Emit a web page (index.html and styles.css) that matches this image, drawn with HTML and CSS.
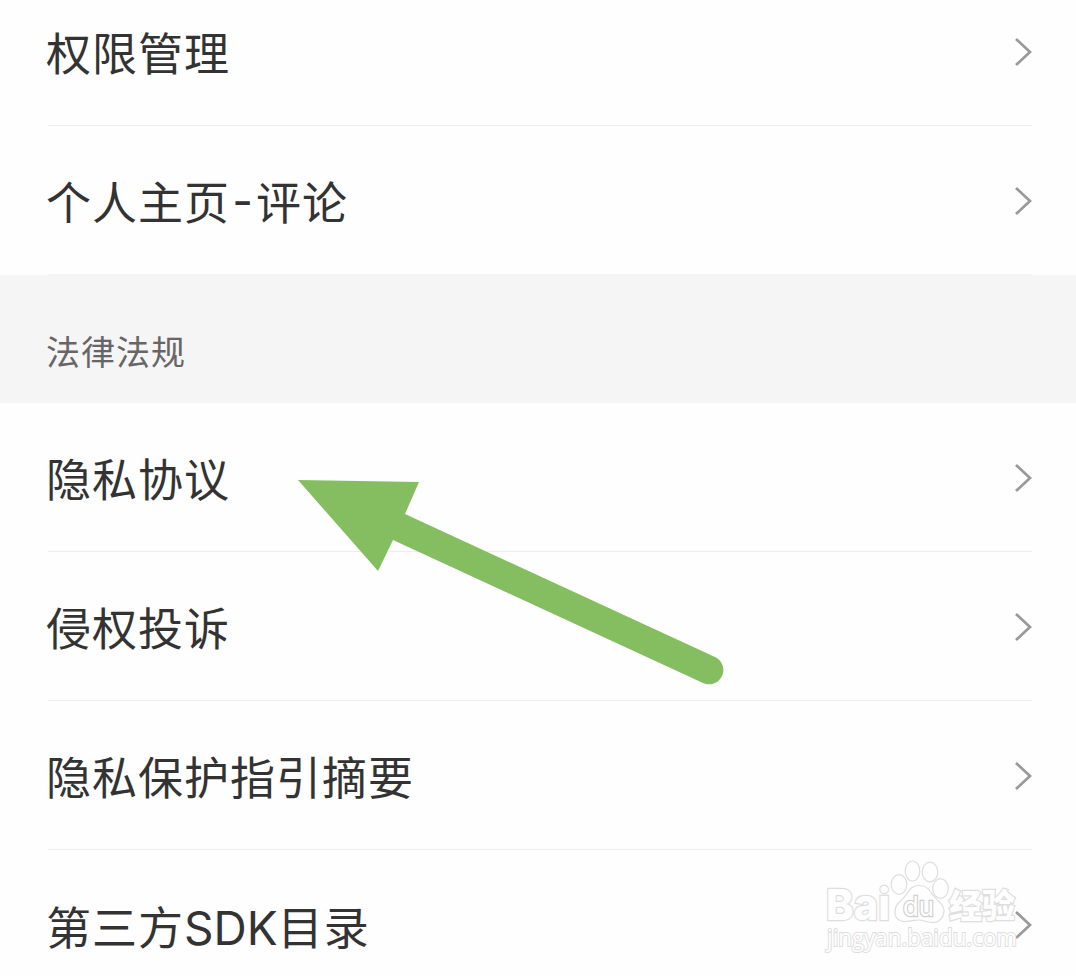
FILE: index.html
```html
<!DOCTYPE html>
<html lang="zh-CN">
<head>
  <meta charset="UTF-8">
  <title>隐私设置</title>
  <link rel="stylesheet" href="styles.css">
</head>
<body>

<div class="page">
  <ul class="list list-top">
    <li class="row"><span class="label">权限管理</span><svg class="chevron" viewBox="0 0 20 32"><path d="M3 3l14 13L3 29"/></svg></li>
    <li class="row"><span class="label">个人主页<span class="dash">-</span>评论</span><svg class="chevron" viewBox="0 0 20 32"><path d="M3 3l14 13L3 29"/></svg></li>
  </ul>

  <h2 class="section-title">法律法规</h2>

  <ul class="list">
    <li class="row"><span class="label">隐私协议</span><svg class="chevron" viewBox="0 0 20 32"><path d="M3 3l14 13L3 29"/></svg></li>
    <li class="row"><span class="label">侵权投诉</span><svg class="chevron" viewBox="0 0 20 32"><path d="M3 3l14 13L3 29"/></svg></li>
    <li class="row"><span class="label">隐私保护指引摘要</span><svg class="chevron" viewBox="0 0 20 32"><path d="M3 3l14 13L3 29"/></svg></li>
    <li class="row"><span class="label">第三方<span class="latin">SDK</span>目录</span><svg class="chevron" viewBox="0 0 20 32"><path d="M3 3l14 13L3 29"/></svg></li>
  </ul>

  <!-- 指向隐私协议的箭头 -->
  <svg class="arrow" viewBox="0 0 426 206">
    <path d="M0 1L121 3L107 35L417 178A14 14 0 0 1 405 204L95 61L80 92Z" class="arrow-shape"/>
  </svg>

  <!-- 水印 -->
  <svg class="watermark" viewBox="0 0 200 100">
    <g class="paw">
      <ellipse cx="79" cy="29.500" rx="7.800" ry="9.800"/>
      <ellipse cx="92.500" cy="16" rx="7.300" ry="10"/>
      <ellipse cx="110" cy="17" rx="7.800" ry="9.800"/>
      <ellipse cx="120.500" cy="33.500" rx="7.800" ry="9.800"/>
      <path d="M99 30.500C91 30.500 89 36 86 40C82 46 75 48 75 57C75 64 80 67 86 66.500C92 66 95 65 99 65C104 65 108 68 114 67.500C120 67 124 62 124 55C123 48 116 45 112 39C109 34 106 30.500 99 30.500Z"/>
    </g>
    <text x="6" y="65" textLength="64" lengthAdjust="spacingAndGlyphs" class="bai">Bai</text>
    <text x="83" y="61" textLength="31" lengthAdjust="spacingAndGlyphs" class="du">du</text>
    <text x="129" y="63" textLength="66" lengthAdjust="spacingAndGlyphs" class="jy">经验</text>
    <text x="7" y="91" textLength="190" lengthAdjust="spacingAndGlyphs" class="site">jingyan.baidu.com</text>
  </svg>
</div>

</body>
</html>
```
FILE: styles.css
```css
body {
  margin: 0;
  background-color: #fefefe;
  font-family: Inter, "Noto Sans CJK SC", sans-serif;
  color: #333;
}
.page {
  position: relative;
  height: 976px;
  overflow: hidden;
}
.list {
  list-style: none;
  margin: 0;
  padding: 0 44px 0 48px;
}
/* 第一行被上边缘截断 */
.list-top {
  margin-top: -23px;
}
.row {
  display: flex;
  align-items: center;
  justify-content: space-between;
  box-sizing: border-box;
  height: 149px;
  border-bottom: 1px solid #ededed;
}
.list-top .row:last-child {
  border-bottom-color: #f3f3f3;
}
.label {
  margin-left: -2px;
  padding-top: 8px;
  font-size: 45px;
  letter-spacing: 1px;
  line-height: 60px;
}
.dash {
  position: relative;
  top: -3px;
  display: inline-block;
  width: 26px;
  text-align: center;
}
.latin {
  font-size: 46px;
  letter-spacing: 0;
}
.chevron {
  width: 20px;
  height: 32px;
  margin-top: 2px;
  margin-right: -1px;
  fill: none;
  stroke: #999;
  stroke-width: 2.7;
}
.section-title {
  box-sizing: border-box;
  height: 128px;
  margin: 0;
  padding: 53px 46px 0;
  background-color: #f5f5f5;
  color: #666;
  font-size: 34px;
  font-weight: normal;
  letter-spacing: 1px;
  line-height: 50px;
}
.arrow {
  position: absolute;
  left: 298px;
  top: 479px;
  width: 426px;
  height: 206px;
}
.arrow-shape {
  fill: #84be61;
}
.watermark {
  position: absolute;
  left: 820px;
  top: 855px;
  width: 200px;
  height: 100px;
  overflow: visible;
  fill: #fefefe;
  stroke: #dedede;
  stroke-width: 1.2;
}
.watermark text {
  paint-order: stroke;
  stroke-width: 2.5;
}
.bai {
  font-size: 43px;
  font-weight: 800;
}
.watermark .du {
  font-size: 27px;
  stroke: #d0d0d0;
}
.jy {
  font-size: 33px;
  font-weight: 900;
}
.watermark .site {
  font-family: "Open Sans", sans-serif;
  font-size: 23px;
  stroke-width: 2;
}
```
